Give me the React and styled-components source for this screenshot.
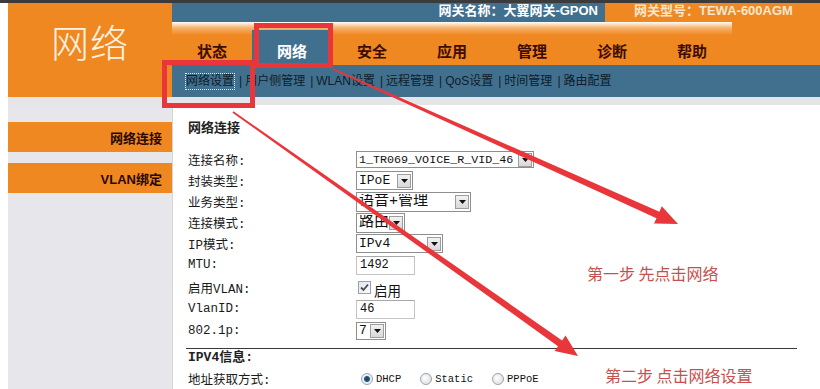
import React from 'react';
import styled, { createGlobalStyle } from 'styled-components';

const ORANGE = '#ef8821';
const BLUE = '#41708f';
const RED = '#e8363b';

const GlobalStyle = createGlobalStyle`
  html, body { margin: 0; padding: 0; background: #fff; }
  body { font-family: "Noto Sans CJK SC", sans-serif; overflow: hidden; }
`;

const tabs = ['状态', '网络', '安全', '应用', '管理', '诊断', '帮助'];
const subLinks = ['网络设置', '用户侧管理', 'WLAN设置', '远程管理', 'QoS设置', '时间管理', '路由配置'];

function arrowPoints(x1, y1, x2, y2, w0, w1, hl, hw) {
  const len = Math.hypot(x2 - x1, y2 - y1);
  const ux = (x2 - x1) / len, uy = (y2 - y1) / len;
  const nx = -uy, ny = ux;
  const bx = x2 - ux * hl, by = y2 - uy * hl;
  const p = [
    [x1 + nx * w0 / 2, y1 + ny * w0 / 2],
    [bx + nx * w1 / 2, by + ny * w1 / 2],
    [bx + nx * hw / 2, by + ny * hw / 2],
    [x2, y2],
    [bx - nx * hw / 2, by - ny * hw / 2],
    [bx - nx * w1 / 2, by - ny * w1 / 2],
    [x1 - nx * w0 / 2, y1 - ny * w0 / 2],
  ];
  return p.map(q => q.map(v => v.toFixed(1)).join(',')).join(' ');
}

function Select({ value, width, height, fs }) {
  return (
    <SelectBox $w={width} $h={height}>
      <SelectValue $fs={fs}>{value}</SelectValue>
      <DropBtn>
        <svg width="7" height="4" viewBox="0 0 7 4"><path d="M0 0h7L3.5 4z" fill="#111" /></svg>
      </DropBtn>
    </SelectBox>
  );
}

function Radio({ checked, label }) {
  return (
    <RadioWrap>
      <RadioDot $on={checked} />
      <RadioText>{label}</RadioText>
    </RadioWrap>
  );
}

export default function App() {
  return (
    <Page>
      <GlobalStyle />
      <TopStrip />
      <Main>
        <Logo>网络</Logo>
        <HeadRight>
          <InfoBar>
            <InfoName>网关名称：大翼网关-GPON</InfoName>
            <InfoModel>网关型号：TEWA-600AGM</InfoModel>
          </InfoBar>
          <TabBar>
            <Tabs>
              {tabs.map(t => (
                <Tab key={t} $active={t === '网络'}><span>{t}</span></Tab>
              ))}
            </Tabs>
          </TabBar>
          <SubNav>
            {subLinks.map((s, i) => (
              <React.Fragment key={s}>
                {i > 0 && <Sep>|</Sep>}
                <SubLink $focus={i === 0}>{s}</SubLink>
              </React.Fragment>
            ))}
          </SubNav>
        </HeadRight>
        <Band />
        <Sidebar>
          <SideItem>网络连接</SideItem>
          <SideItem>VLAN绑定</SideItem>
        </Sidebar>
        <Content>
          <Title>网络连接</Title>
          <Form>
            <Label>连接名称:</Label>
            <Cell><Select value="1_TR069_VOICE_R_VID_46" width={178} height={17} fs={11.7} /></Cell>
            <Label>封装类型:</Label>
            <Cell><Select value="IPoE" width={57} height={19} /></Cell>
            <Label>业务类型:</Label>
            <Cell><Select value="语音+管理" width={115} height={20} fs={15} /></Cell>
            <Label>连接模式:</Label>
            <Cell><Select value="路由" width={49} height={20} fs={15} /></Cell>
            <Label>IP模式:</Label>
            <Cell><Select value="IPv4" width={87} height={19} /></Cell>
            <Label $tall>MTU:</Label>
            <Cell><TextInput>1492</TextInput></Cell>
            <Label $tall>启用VLAN:</Label>
            <Cell>
              <Check>
                <svg width="11" height="11" viewBox="0 0 11 11"><path d="M2 5.5l2.5 2.5L9 2.5" stroke="#4a4a4a" strokeWidth="1.8" fill="none" /></svg>
              </Check>
              <CheckText>启用</CheckText>
            </Cell>
            <Label $tall>VlanID:</Label>
            <Cell><TextInput>46</TextInput></Cell>
            <Label>802.1p:</Label>
            <Cell><Select value="7" width={30} height={18} /></Cell>
          </Form>
          <Rule />
          <Title>IPV4信息:</Title>
          <Form>
            <Label>地址获取方式:</Label>
            <Cell>
              <Radio checked label="DHCP" />
              <Radio label="Static" />
              <Radio label="PPPoE" />
            </Cell>
          </Form>
        </Content>
      </Main>

      <Note style={{ left: 587, top: 262 }}>第一步 先点击网络</Note>
      <Note style={{ left: 605, top: 364 }}>第二步 点击网络设置</Note>
      <MarkBox style={{ left: 254, top: 23, width: 79, height: 45 }} />
      <MarkBox style={{ left: 162, top: 60, width: 93, height: 48 }} />
      <Arrows width="820" height="389" viewBox="0 0 820 389">
        <polygon points={arrowPoints(333, 69, 678, 224, 1.8, 7, 22, 19)} fill={RED} />
        <polygon points={arrowPoints(233, 112, 578, 356, 1.8, 7, 22, 19)} fill={RED} />
      </Arrows>
    </Page>
  );
}

const Page = styled.div`
  position: relative;
  width: 820px;
  height: 389px;
  overflow: hidden;
  background: #fff;
`;

const TopStrip = styled.div`
  height: 3px;
  background: #3b3b3b;
`;

const Main = styled.div`
  display: grid;
  grid-template-columns: 164px 1fr;
  grid-template-rows: 94px 8px 284px;
  padding-left: 8px;
`;

const Logo = styled.div`
  background: ${ORANGE};
  color: #fdf3e2;
  font-size: 38px;
  font-weight: 300;
  line-height: 40px;
  text-align: center;
  padding-top: 18px;
  letter-spacing: 1px;
`;

const HeadRight = styled.div`
  display: flex;
  flex-direction: column;
`;

const InfoBar = styled.div`
  display: flex;
  height: 19px;
  font-size: 13px;
  font-weight: bold;
  line-height: 15px;
`;

const InfoName = styled.div`
  width: 433px;
  background: ${BLUE};
  color: #fff;
  text-align: right;
  padding-right: 7px;
  box-sizing: border-box;
  font-family: "Liberation Sans", "Noto Sans CJK SC", sans-serif;
`;

const InfoModel = styled.div`
  flex: 1;
  background: ${ORANGE};
  color: #f7e6cf;
  padding-left: 29px;
  font-family: "Liberation Sans", "Noto Sans CJK SC", sans-serif;
`;

const TabBar = styled.div`
  height: 43px;
  background: ${ORANGE};
  display: flex;
`;

const Tabs = styled.div`
  display: flex;
  width: 560px;
  background: linear-gradient(to bottom, #fff 0, #fde3c6 2px, #f6b26b 6px, ${ORANGE} 13px);
`;

const Tab = styled.div`
  width: 80px;
  margin-top: 8px;
  display: flex;
  align-items: flex-end;
  justify-content: center;
  padding-bottom: 4px;
  box-sizing: border-box;
  font-size: 15px;
  font-weight: bold;
  color: ${p => (p.$active ? '#fff' : '#3c0c02')};
  background: ${p => (p.$active ? BLUE : 'transparent')};
`;

const SubNav = styled.div`
  height: 32px;
  background: ${BLUE};
  display: flex;
  align-items: center;
  padding-left: 14px;
  font-size: 12px;
  color: #0e1c2a;
  font-family: "Liberation Sans", "Noto Sans CJK SC", sans-serif;
`;

const SubLink = styled.span`
  outline: ${p => (p.$focus ? '1px dotted #e0e8ee' : 'none')};
  line-height: 15px;
`;

const Sep = styled.span`
  margin: 0 3px 0 5px;
  color: #0e1c2a;
`;

const Band = styled.div`
  grid-column: 1 / 3;
  background: #e5e5e9;
`;

const Sidebar = styled.div`
  background: #e7e7eb;
  padding-top: 17px;
  display: flex;
  flex-direction: column;
  gap: 11px;
`;

const SideItem = styled.div`
  height: 30px;
  background: ${ORANGE};
  color: #2b0902;
  font-size: 13px;
  font-weight: bold;
  display: flex;
  align-items: center;
  justify-content: flex-end;
  padding-right: 10px;
  font-family: "Liberation Sans", "Noto Sans CJK SC", sans-serif;
`;

const Content = styled.div`
  background: #fff;
  border-left: 1px solid #d6d6d6;
  padding: 15px 0 0 15px;
  color: #111;
`;

const Title = styled.div`
  font-size: 13px;
  font-weight: bold;
  line-height: 18px;
  color: #222;
  font-family: "Liberation Mono", "Noto Sans CJK SC", monospace;
`;

const Form = styled.div`
  display: grid;
  grid-template-columns: 168px 1fr;
  margin-top: 11px;
  &:last-child { margin-top: 1px; }
`;

const Label = styled.div`
  height: ${p => (p.$tall ? 22 : 21)}px;
  display: flex;
  align-items: center;
  font-size: 12.5px;
  color: #1a1a1a;
  font-family: "Liberation Mono", "Noto Sans CJK SC", monospace;
`;

const Cell = styled.div`
  display: flex;
  align-items: center;
  min-height: 0;
`;

const SelectBox = styled.div`
  width: ${p => p.$w}px;
  height: ${p => p.$h}px;
  box-sizing: border-box;
  border: 1px solid #8e8e8e;
  background: #fff;
  display: flex;
  align-items: center;
  padding: 1px;
`;

const SelectValue = styled.div`
  flex: 1;
  overflow: hidden;
  white-space: nowrap;
  padding-left: 1px;
  font-size: ${p => p.$fs || 13}px;
  line-height: 16px;
  font-family: "Liberation Mono", "Noto Sans CJK SC", monospace;
  color: #111;
`;

const DropBtn = styled.div`
  width: 14px;
  height: 14px;
  flex-shrink: 0;
  box-sizing: border-box;
  border: 1px solid #9d9d9d;
  background: linear-gradient(#f2f2f2, #d8d8d8);
  display: flex;
  align-items: center;
  justify-content: center;
`;

const TextInput = styled.div`
  width: 59px;
  height: 19px;
  box-sizing: border-box;
  border: 1px solid #c4c4c4;
  border-top-color: #a8a8a8;
  padding-left: 3px;
  font-size: 12px;
  line-height: 17px;
  font-family: "Liberation Mono", monospace;
  color: #111;
`;

const Check = styled.div`
  width: 13px;
  height: 13px;
  margin-left: 2px;
  box-sizing: border-box;
  border: 1px solid #8fa2b8;
  background: linear-gradient(135deg, #e2e6ec, #fafbfc);
  display: flex;
  align-items: center;
  justify-content: center;
`;

const CheckText = styled.span`
  font-size: 13.5px;
  line-height: 14px;
  margin-left: 3px;
  margin-top: 5px;
  color: #111;
`;

const RadioWrap = styled.div`
  display: flex;
  align-items: center;
  margin-left: 5px;
  margin-right: 14px;
`;

const RadioDot = styled.div`
  width: 12px;
  height: 12px;
  border-radius: 50%;
  box-sizing: border-box;
  border: 1px solid #9aa4ae;
  background: ${p => (p.$on
    ? 'radial-gradient(circle, #1d3a5c 0, #2c5880 2.5px, #e6eaef 3.5px, #f7f7f7 6px)'
    : 'radial-gradient(circle at 40% 40%, #fff 0, #e2e2e2 6px)')};
`;

const RadioText = styled.span`
  font-size: 10.5px;
  margin-left: 3px;
  font-family: "Liberation Mono", monospace;
  color: #111;
`;

const Rule = styled.div`
  height: 1px;
  background: #3a3a3a;
  margin: 7px 23px 0 -2px;
`;

const Note = styled.div`
  position: absolute;
  font-size: 16px;
  line-height: 22px;
  color: #c84f4e;
  white-space: nowrap;
  font-family: "Noto Sans CJK SC", sans-serif;
`;

const MarkBox = styled.div`
  position: absolute;
  box-sizing: border-box;
  border: 5px solid ${RED};
`;

const Arrows = styled.svg`
  position: absolute;
  left: 0;
  top: 0;
  pointer-events: none;
`;
